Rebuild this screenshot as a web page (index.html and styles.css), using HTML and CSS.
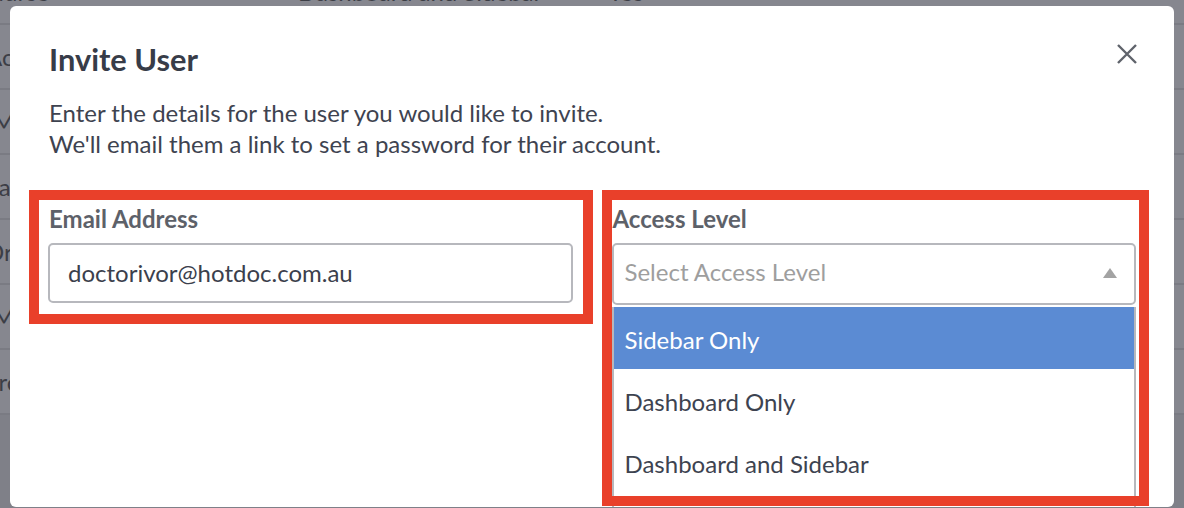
FILE: index.html
```html
<!DOCTYPE html>
<html lang="en">
<head>
<meta charset="utf-8">
<title>Invite User</title>
<link rel="stylesheet" href="styles.css">
</head>
<body>
<div class="page">
  <div class="table">
    <div class="row"><span class="c1">Nurse</span><span class="c2">Dashboard and Sidebar</span><span class="c3">Yes</span></div>
    <div class="row"><span class="c1">Accounts</span><span class="c2">Dashboard Only</span><span class="c3">Yes</span></div>
    <div class="row"><span class="c1">IManager</span><span class="c2">Dashboard and Sidebar</span><span class="c3">No</span></div>
    <div class="row"><span class="c1">Sarah</span><span class="c2">Sidebar Only</span><span class="c3">Yes</span></div>
    <div class="row"><span class="c1">Dr Ivor</span><span class="c2">Dashboard and Sidebar</span><span class="c3">Yes</span></div>
    <div class="row"><span class="c1">IMark</span><span class="c2">Dashboard Only</span><span class="c3">No</span></div>
    <div class="row"><span class="c1">Front</span><span class="c2">Sidebar Only</span><span class="c3">Yes</span></div>
  </div>
</div>

<div class="modal">
  <button class="close" type="button" aria-label="Close">
    <svg width="20" height="20" viewBox="0 0 20 20"><path d="M1 1 L19 19 M19 1 L1 19" stroke="#5f636b" stroke-width="2.4" stroke-linecap="butt" fill="none"/></svg>
  </button>
  <h1 class="title">Invite User</h1>
  <p class="intro">Enter the details for the user you would like to invite.<br>We'll email them a link to set a password for their account.</p>
  <div class="fields">
    <div class="field field-email">
      <label class="label">Email Address</label>
      <div class="input">doctorivor@hotdoc.com.au</div>
    </div>
    <div class="field field-access">
      <label class="label">Access Level</label>
      <div class="select"><span class="placeholder">Select Access Level</span><span class="caret"></span></div>
      <ul class="menu">
        <li class="option active">Sidebar Only</li>
        <li class="option">Dashboard Only</li>
        <li class="option">Dashboard and Sidebar</li>
        <li class="option">No Access</li>
      </ul>
    </div>
  </div>
</div>
</body>
</html>
```
FILE: styles.css
```css
* { box-sizing: border-box; }

html, body {
  margin: 0;
  height: 100%;
}

body {
  background: #7f8088;
  font-family: Lato, "Open Sans", "Liberation Sans", sans-serif;
  overflow: hidden;
}

.page {
  background: #86878f;
}

.table {
  margin-top: -40px;
  margin-left: -14px;
}

.row {
  display: flex;
  align-items: center;
  height: 65px;
  border-bottom: 2px solid #7a7b83;
  font-size: 24px;
  color: #3c3e46;
}

.c1 { width: 312px; }
.c2 { width: 310px; }
.c3 { width: 100px; }

.modal {
  position: fixed;
  left: 10px;
  top: 6px;
  width: 1164px;
  height: 501px;
  background: #ffffff;
  border-radius: 6px;
  padding: 36px 38px 0 38px;
  overflow: hidden;
}

.close {
  position: absolute;
  top: 38px;
  right: 37px;
  width: 20px;
  height: 20px;
  padding: 0;
  border: 0;
  background: none;
  display: flex;
}

.title {
  margin: 0 0 0 1px;
  font-size: 30.8px;
  line-height: 36px;
  font-weight: 700;
  color: #373c48;
}

.intro {
  margin: 18.5px 0 0 1px;
  font-size: 24px;
  line-height: 31px;
  color: #3e4350;
}

.fields {
  display: grid;
  grid-template-columns: 1fr 1fr;
  column-gap: 39px;
  margin-top: 45px;
}

.field {
  position: relative;
  display: flex;
  flex-direction: column;
}

.field::after {
  content: "";
  position: absolute;
  border: 10px solid #e9402a;
  pointer-events: none;
  z-index: 5;
}

.field-email::after {
  top: -14px;
  left: -19px;
  right: -20px;
  bottom: -19px;
}

.field-access::after {
  top: -14px;
  left: -10px;
  right: -13px;
  bottom: -201px;
}

.label {
  display: block;
  margin: 0 0 9px 1px;
  font-size: 24px;
  line-height: 30px;
  font-weight: 700;
  color: #5d6169;
}

.input {
  height: 60px;
  border: 2px solid #b7b8bd;
  border-radius: 5px;
  padding: 0 18px;
  display: flex;
  align-items: center;
  font-size: 24px;
  color: #3b404c;
}

.select {
  height: 62px;
  border: 2px solid #b7b8bd;
  border-radius: 5px;
  padding: 0 17px 4px 11px;
  display: flex;
  align-items: center;
  justify-content: space-between;
  font-size: 24px;
}

.placeholder {
  color: #9e9e9e;
}

.caret {
  width: 0;
  height: 0;
  margin-top: 3px;
  border-left: 7.5px solid transparent;
  border-right: 7.5px solid transparent;
  border-bottom: 10px solid #a3a3a3;
}

.menu {
  position: absolute;
  top: 100%;
  left: 0;
  right: 0;
  margin: 2px 0 0 0;
  padding: 0;
  list-style: none;
  border: 2px solid #b7b8bd;
  border-top: 0;
  border-radius: 0 0 5px 5px;
  background: #ffffff;
  z-index: 2;
}

.option {
  height: 62px;
  padding: 3px 11px 0 11px;
  display: flex;
  align-items: center;
  font-size: 24px;
  color: #3d4350;
}

.option.active {
  background: #5b8bd3;
  color: #ffffff;
}
```
